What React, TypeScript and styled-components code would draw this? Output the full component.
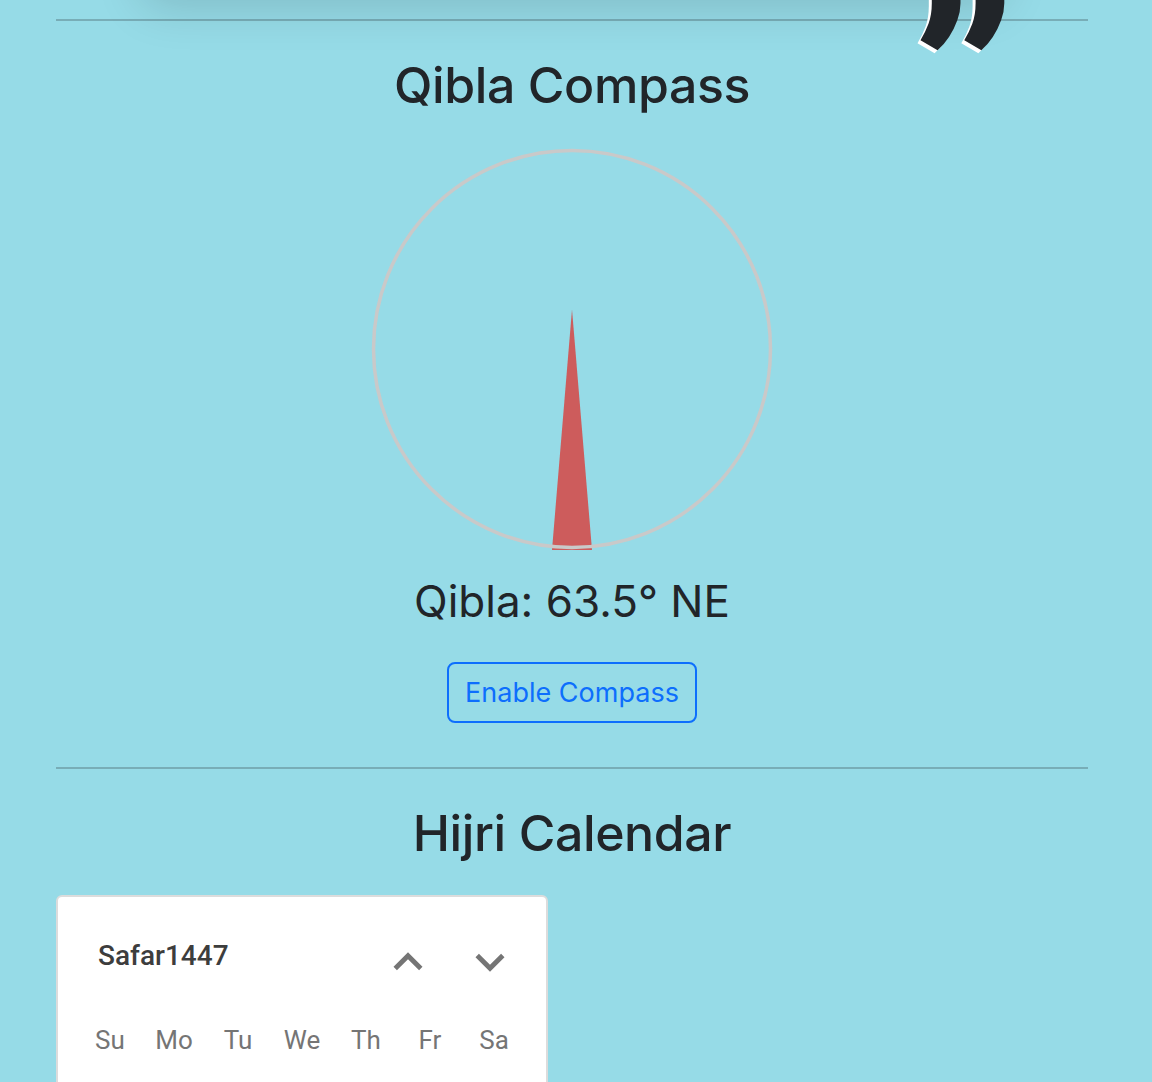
import React from "react";
import styled, { createGlobalStyle } from "styled-components";

const GlobalStyle = createGlobalStyle`
  * {
    box-sizing: border-box;
  }

  body {
    margin: 0;
    background: #96dbe7;
    color: #212529;
    font-family: Inter, "Noto Sans", sans-serif;
  }
`;

const Page = styled.main`
  padding: 0 64px 0 56px;
  overflow: hidden;
`;

const QuoteCard = styled.section`
  position: relative;
  width: 860px;
  height: 300px;
  margin: -313px auto 0;
  border-radius: 16px;
  background: #96dbe7;
  box-shadow: 0 18px 48px rgba(0, 0, 0, 0.16);
`;

const QuoteMark = styled.span`
  position: absolute;
  right: -15px;
  top: calc(100% - 27px);
  font-family: Roboto, "Liberation Sans", sans-serif;
  font-size: 260px;
  font-weight: 700;
  line-height: 1;
  color: #212529;
  text-shadow: -3px 3px 0 #fff;
`;

const Divider = styled.hr`
  margin: ${({ $top }: { $top: number }) => $top}px 0 34px;
  border: 0;
  border-top: 2px solid rgba(33, 37, 41, 0.25);
`;

const Heading = styled.h2`
  margin: 0 0 16px;
  font-size: 50px;
  font-weight: 500;
  line-height: 1.2;
  letter-spacing: -0.4px;
  text-align: center;
`;

const Section = styled.section`
  display: flex;
  flex-direction: column;
  align-items: center;
`;

const CompassDial = styled.svg`
  display: block;
  margin-top: 18px;
  overflow: visible;
`;

const Bearing = styled.p`
  margin: 26px 0 0;
  font-size: 44px;
  line-height: 1.2;
`;

const OutlineButton = styled.button`
  margin-top: 34px;
  padding: 8px 16px;
  font-family: inherit;
  font-size: 27px;
  line-height: 41px;
  color: #0d6efd;
  background: transparent;
  border: 2px solid #0d6efd;
  border-radius: 8px;
  cursor: pointer;
`;

const CalendarCard = styled.div`
  width: 492px;
  min-height: 360px;
  margin-top: 32px;
  padding: 36px 20px 0;
  background: #fff;
  border: 2px solid #dcdcdc;
  border-radius: 6px;
  font-family: Roboto, "Liberation Sans", sans-serif;
`;

const CalendarHeader = styled.div`
  display: flex;
  align-items: flex-start;
  height: 58px;
  padding-left: 20px;
  margin-right: 7px;
`;

const MonthLabel = styled.span`
  flex: 1;
  margin-top: 9px;
  font-size: 28px;
  font-weight: 500;
  line-height: 1;
  color: #3d3d3d;
`;

const ArrowButton = styled.button`
  display: flex;
  width: 58px;
  height: 58px;
  padding: 0;
  margin-left: ${({ $gap }: { $gap: number }) => $gap}px;
  background: none;
  border: 0;
  color: #757575;
  cursor: pointer;
`;

const WeekRow = styled.div`
  display: grid;
  grid-template-columns: repeat(7, 64px);
  margin-top: 36px;
`;

const WeekDay = styled.span`
  font-size: 26px;
  line-height: 1;
  text-align: center;
  color: #757575;
`;

const Chevron = ({ up }: { up?: boolean }) => (
  <svg width="58" height="58" viewBox="0 0 24 24" fill="currentColor">
    {up ? (
      <path d="M7.41 15.41 12 10.83l4.59 4.58L18 14l-6-6-6 6z" />
    ) : (
      <path d="M7.41 8.59 12 13.17l4.59-4.58L18 10l-6 6-6-6z" />
    )}
  </svg>
);

const weekDays = ["Su", "Mo", "Tu", "We", "Th", "Fr", "Sa"];

const App = () => {
  return (
    <>
      <GlobalStyle />
      <Page>
        <QuoteCard>
          <QuoteMark>”</QuoteMark>
        </QuoteCard>

        <Divider $top={32} />
        <Section>
          <Heading>Qibla Compass</Heading>
          <CompassDial width="400" height="400" viewBox="0 0 400 400">
            <polygon points="200,160.6 180,401 220,401" fill="#cd5c5c" />
            <circle
              cx="200"
              cy="200"
              r="198.5"
              fill="none"
              stroke="#c9c9c9"
              strokeWidth="3.5"
            />
          </CompassDial>
          <Bearing>Qibla: 63.5° NE</Bearing>
          <OutlineButton>Enable Compass</OutlineButton>
        </Section>

        <Divider $top={44} />
        <Heading>Hijri Calendar</Heading>
        <CalendarCard>
          <CalendarHeader>
            <MonthLabel>Safar1447</MonthLabel>
            <ArrowButton $gap={0} aria-label="Previous month">
              <Chevron up />
            </ArrowButton>
            <ArrowButton $gap={24} aria-label="Next month">
              <Chevron />
            </ArrowButton>
          </CalendarHeader>
          <WeekRow>
            {weekDays.map((day) => (
              <WeekDay key={day}>{day}</WeekDay>
            ))}
          </WeekRow>
        </CalendarCard>
      </Page>
    </>
  );
};

export default App;
